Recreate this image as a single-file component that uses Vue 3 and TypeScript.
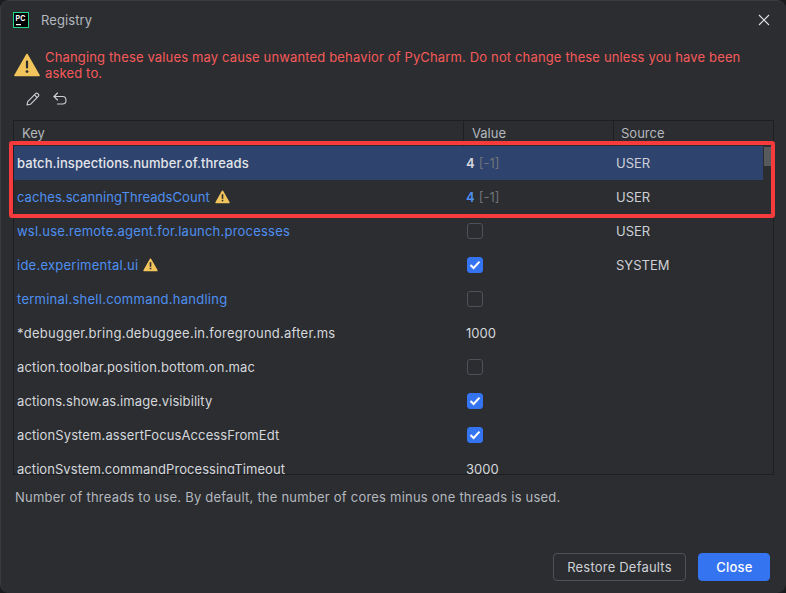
<script setup lang="ts">
interface Row {
  key: string
  track: number
  modified?: boolean
  warn?: boolean
  value?: string
  def?: string
  check?: boolean
  source?: string
  selected?: boolean
}
const rows: Row[] = [
  { key: 'batch.inspections.number.of.threads', track: 0.08, selected: true, value: '4', def: '[-1]', source: 'USER' },
  { key: 'caches.scanningThreadsCount', track: 0.07, modified: true, warn: true, value: '4', def: '[-1]', source: 'USER' },
  { key: 'wsl.use.remote.agent.for.launch.processes', track: 0.22, modified: true, check: false, source: 'USER' },
  { key: 'ide.experimental.ui', track: 0.25, modified: true, warn: true, check: true, source: 'SYSTEM' },
  { key: 'terminal.shell.command.handling', track: 0.25, modified: true, check: false },
  { key: '*debugger.bring.debuggee.in.foreground.after.ms', track: 0.25, value: '1000' },
  { key: 'action.toolbar.position.bottom.on.mac', track: 0.17, check: false },
  { key: 'actions.show.as.image.visibility', track: 0.09, check: true },
  { key: 'actionSystem.assertFocusAccessFromEdt', track: 0.11, check: true },
  { key: 'actionSystem.commandProcessingTimeout', track: 0.06, value: '3000' },
]
</script>

<template>
  <div class="dialog">
    <header class="title">
      <svg class="logo" width="16" height="16" viewBox="0 0 16 16">
        <rect x="0.5" y="0.5" width="15" height="15" fill="#000" stroke="#21d789" />
        <rect x="3" y="12" width="5" height="1.2" fill="#fff" />
        <text x="2.6" y="9" class="logo-text">PC</text>
      </svg>
      <span class="title-text">Registry</span>
      <svg class="close" width="12" height="12" viewBox="0 0 12 12">
        <path d="M1 1L11 11M11 1L1 11" stroke="#dfe1e5" stroke-width="1.1" fill="none" />
      </svg>
    </header>

    <div class="warning">
      <svg class="warn-big" width="26" height="24" viewBox="0 0 26 24">
        <path d="M13 1.5L25 22.5H1Z" fill="#f2c55c" stroke="#f2c55c" stroke-width="1.6" stroke-linejoin="round" />
        <rect x="11.9" y="7.5" width="2.2" height="8" rx="1" fill="#2b2d30" />
        <circle cx="13" cy="18.6" r="1.4" fill="#2b2d30" />
      </svg>
      <p>Changing these values may cause unwanted behavior of PyCharm. Do not change these unless you have been asked to.</p>
    </div>

    <div class="toolbar">
      <svg width="14" height="14" viewBox="0 0 14 14" fill="none" stroke="#ced0d6" stroke-width="1.1" stroke-linejoin="round">
        <path d="M1 13L1.7 9.6L9.6 1.7C10.2 1.1 11.1 1.1 11.8 1.7L12.3 2.2C12.9 2.9 12.9 3.8 12.3 4.4L4.4 12.3Z" />
        <path d="M8.5 2.9L11.1 5.5" />
      </svg>
      <svg width="14" height="14" viewBox="0 0 14 14" fill="none" stroke="#ced0d6" stroke-width="1.1" stroke-linecap="round" stroke-linejoin="round">
        <path d="M4.5 1L1 4.5L4.5 8" />
        <path d="M1 4.5H9.5C11.7 4.5 13 6 13 8.2C13 10.4 11.7 12 9.5 12H4.5" />
      </svg>
    </div>

    <div class="table">
      <div class="head">
        <div class="hc hc-key">Key</div>
        <div class="hc hc-value">Value</div>
        <div class="hc hc-source">Source</div>
      </div>
      <div class="body">
        <div v-for="row in rows" :key="row.key" class="row" :class="{ selected: row.selected }">
          <div class="c-key" :class="{ modified: row.modified, strong: row.selected }">
            <span :style="{ letterSpacing: row.track + 'px' }">{{ row.key }}</span>
            <svg v-if="row.warn" class="warn-small" width="15" height="14" viewBox="0 0 15 14">
              <path d="M7.5 1.2L14 12.6H1Z" fill="#f2c55c" stroke="#f2c55c" stroke-width="1.4" stroke-linejoin="round" />
              <rect x="6.7" y="4.2" width="1.6" height="4.6" fill="#2b2d30" />
              <rect x="6.7" y="9.8" width="1.6" height="1.5" fill="#2b2d30" />
            </svg>
          </div>
          <div class="c-value">
            <template v-if="row.value">
              <span class="num" :class="{ blue: row.def && !row.selected, bold: row.def }">{{ row.value }}</span>
              <span v-if="row.def" class="def">{{ row.def }}</span>
            </template>
            <span v-else class="box" :class="{ on: row.check }">
              <svg v-if="row.check" width="12" height="10" viewBox="0 0 12 10" fill="none">
                <path d="M1.5 5L4.6 8L10.5 1.6" stroke="#fff" stroke-width="2" />
              </svg>
            </span>
          </div>
          <div class="c-source">{{ row.source }}</div>
        </div>
      </div>
      <div class="scrollbar"><div class="thumb"></div></div>
    </div>

    <p class="desc">Number of threads to use. By default, the number of cores minus one threads is used.</p>

    <footer class="actions">
      <button class="btn">Restore Defaults</button>
      <button class="btn primary">Close</button>
    </footer>

    <div class="highlight"></div>
  </div>
</template>

<style>
html, body { margin: 0; background: #1b1c1e; }
</style>

<style scoped>
.dialog {
  position: relative;
  box-sizing: border-box;
  width: 786px;
  height: 593px;
  overflow: hidden;
  background: #2b2d30;
  border-radius: 9px;
  border: 1px solid #393b40;
  border-width: 1px 0 0 1px;
  font-family: Inter, "Liberation Sans", sans-serif;
  font-size: 13px;
  color: #dfe1e5;
  display: flex;
  flex-direction: column;
}
.title {
  height: 37px;
  flex: none;
  display: flex;
  align-items: center;
  padding: 0 16px 0 12px;
}
.logo { flex: none; }
.logo-text { font: 700 7px Inter, sans-serif; fill: #fff; }
.title-text { margin-left: 12px; color: #b4b8bf; font-size: 13px; letter-spacing: 0.1px; }
.close { margin-left: auto; }
.warning {
  display: flex;
  align-items: flex-start;
  margin: 11px 24px 0 13px;
  height: 32px;
  gap: 5px;
}
.warn-big { flex: none; margin-top: 4px; }
.warning p {
  margin: 0;
  color: #f55a5a;
  font-size: 13px;
  line-height: 16px;
  letter-spacing: 0.15px;
}
.toolbar {
  display: flex;
  gap: 13px;
  align-items: center;
  padding-left: 25px;
  height: 20px;
  margin-top: 8px;
}
.table {
  position: relative;
  margin: 11px 12px 0 12px;
  width: 761px;
  height: 355px;
  box-sizing: border-box;
  border: 1px solid #1e1f22;
  overflow: hidden;
  flex: none;
}
.head {
  display: flex;
  height: 25px;
  color: #b4b8bf;
}
.hc {
  box-sizing: border-box;
  padding: 2px 0 0 8px;
  line-height: 20px;
  border-left: 1px solid #1e1f22;
}
.hc-key { width: 449px; border-left: 0; }
.hc-value { width: 150px; }
.hc-source { flex: 1; padding-left: 7px; }
.body { width: 749px; }
.row {
  display: flex;
  align-items: center;
  height: 34px;
  color: #d5d7dc;
}
.row.selected { background: #2e436e; }
.c-key {
  width: 449px;
  box-sizing: border-box;
  padding-left: 3px;
  display: flex;
  align-items: center;
  gap: 5px;
}
.c-key.modified { color: #4f8ff0; }
.c-key.strong { font-weight: 500; color: #e4e6ea; }
.c-value {
  width: 150px;
  box-sizing: border-box;
  padding-left: 3px;
  display: flex;
  align-items: center;
  gap: 4px;
}
.c-source { flex: 1; padding-left: 3px; color: #ced0d6; }
.num.bold { font-weight: 600; }
.num.blue { color: #4f8ff0; }
.def { color: #6f737a; }
.box {
  box-sizing: border-box;
  width: 16px;
  height: 16px;
  margin-left: 1px;
  border-radius: 3px;
  border: 1px solid #4e5157;
  display: flex;
  align-items: center;
  justify-content: center;
}
.box.on { background: #3574f0; border-color: #3574f0; }
.scrollbar {
  position: absolute;
  top: 25px;
  right: 0;
  bottom: 0;
  width: 10px;
}
.thumb {
  width: 8px;
  height: 19px;
  margin: 1px 0 0 1px;
  background: #58595c;
}
.desc {
  margin: 14px 0 0 14px;
  color: #b4b8bf;
  font-size: 13px;
  line-height: 17px;
  letter-spacing: 0.22px;
}
.actions {
  margin-top: auto;
  display: flex;
  justify-content: flex-end;
  gap: 12px;
  padding: 0 16px 12px 0;
}
.btn {
  box-sizing: border-box;
  height: 28px;
  width: 133px;
  padding: 0;
  border: 1px solid #4e5157;
  border-radius: 4px;
  background: transparent;
  color: #ced0d6;
  font: inherit;
  letter-spacing: 0.2px;
}
.btn.primary {
  width: 72px;
  padding-left: 1px;
  background: #3574f0;
  border-color: #3574f0;
  color: #fff;
  font-weight: 500;
}
.highlight {
  position: absolute;
  left: 8px;
  top: 140px;
  width: 766px;
  height: 77px;
  box-sizing: border-box;
  border: 4px solid #f73a3c;
  border-radius: 3px;
  pointer-events: none;
}
</style>
